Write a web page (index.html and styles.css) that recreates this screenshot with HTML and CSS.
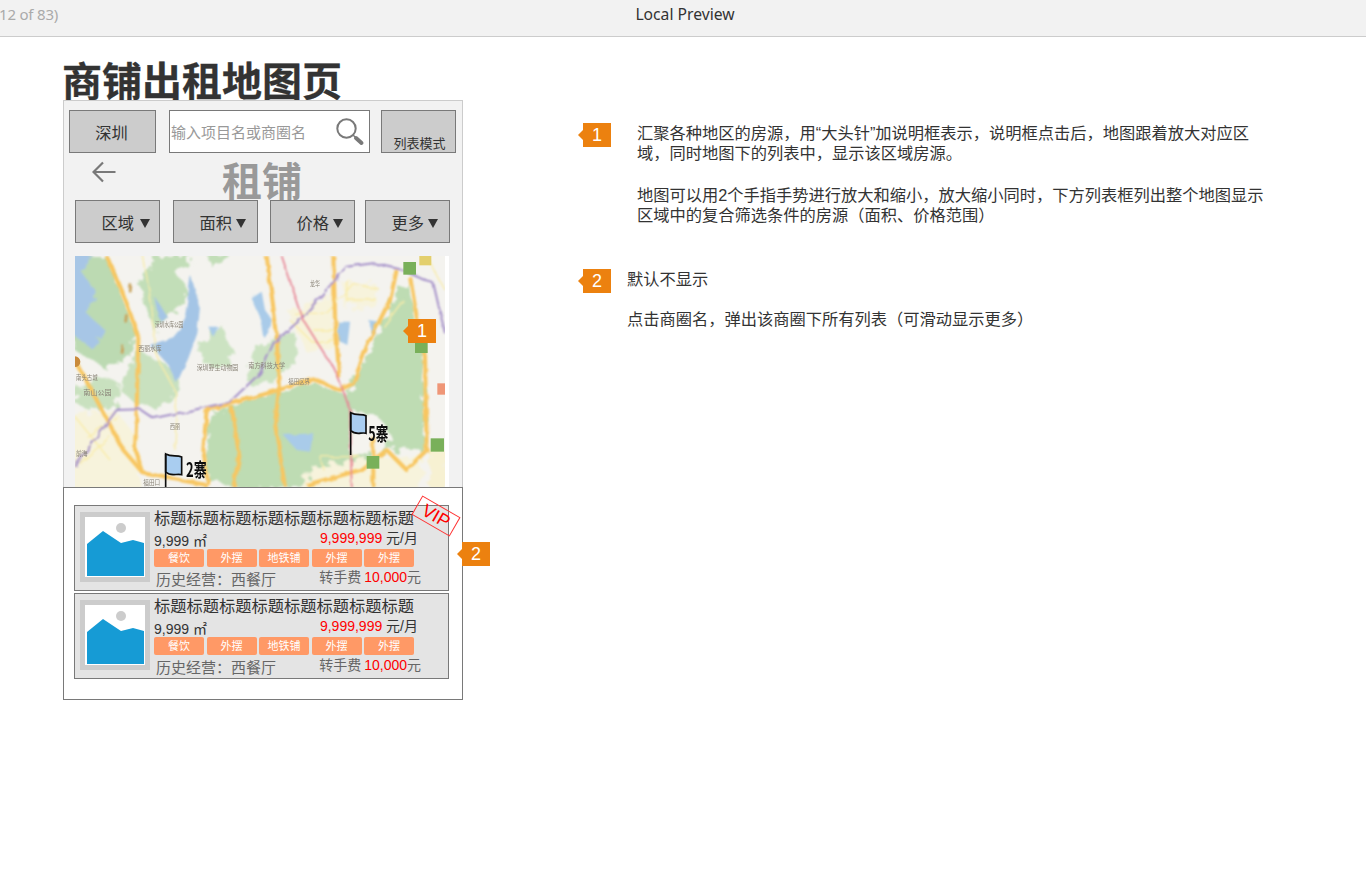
FILE: index.html
```html
<!DOCTYPE html>
<html lang="zh-CN">
<head>
<meta charset="utf-8">
<title>Local Preview</title>
<link rel="stylesheet" href="styles.css">
</head>
<body>
<header class="topbar">
  <span class="pager">12 of 83)</span>
  <span class="topbar-title">Local Preview</span>
</header>
<main class="canvas">
  <section class="left">
    <h1 class="page-title">商铺出租地图页</h1>
    <div class="phone">
      <div class="search-row">
        <div class="btn city">深圳</div>
        <div class="search">
          <span class="placeholder">输入项目名或商圈名</span>
          <svg class="search-icon" viewBox="0 0 30 30"><circle cx="11.500" cy="11.500" r="9.200" fill="none" stroke="#797979" stroke-width="2"/><path d="M18 18l8 7.500" stroke="#797979" stroke-width="1.500" fill="none"/><path d="M21 21l5.500 5" stroke="#797979" stroke-width="4" stroke-linecap="round" fill="none"/></svg>
        </div>
        <div class="btn mode">列表模式</div>
      </div>
      <div class="heading-row">
        <svg class="back" viewBox="0 0 24 22"><path d="M23.500 11H2M11 1.500 1.500 11 11 20.500" fill="none" stroke="#797979" stroke-width="2.200"/></svg>
        <div class="heading">租铺</div>
      </div>
      <div class="filters">
        <div class="btn filter">区域<span class="caret"></span></div>
        <div class="btn filter">面积<span class="caret"></span></div>
        <div class="btn filter">价格<span class="caret"></span></div>
        <div class="btn filter">更多<span class="caret"></span></div>
      </div>
      <div class="map-wrap">
        <svg class="map" viewBox="45 18 1110 693" preserveAspectRatio="none">
          <defs>
            <filter id="area" x="-5%" y="-5%" width="110%" height="110%">
              <feTurbulence type="fractalNoise" baseFrequency="0.035" numOctaves="3" seed="7" result="n"/>
              <feDisplacementMap in="SourceGraphic" in2="n" scale="42" result="d"/>
              <feGaussianBlur in="d" stdDeviation="3"/>
            </filter>
            <filter id="soft" x="-5%" y="-5%" width="110%" height="110%">
              <feTurbulence type="fractalNoise" baseFrequency="0.03" numOctaves="2" seed="3" result="n"/>
              <feDisplacementMap in="SourceGraphic" in2="n" scale="14" result="d"/>
              <feGaussianBlur in="d" stdDeviation="2.800"/>
            </filter>
            <filter id="ink" x="-20%" y="-20%" width="140%" height="140%"><feGaussianBlur stdDeviation="1.800"/></filter>
          </defs>
          <rect x="45" y="18" width="1110" height="693" fill="#f4f3ef"/>
          <g filter="url(#area)">
            <path d="M60 18H140L170 100 230 250 200 330 130 350 45 300V18Z" fill="#bcdab2"/>
            <path d="M30 10H95L70 70 110 130 80 190 140 245 95 295 30 250Z" fill="#a7c6e6"/>
            <path d="M280 18H400L350 70 390 130 330 200 280 240 240 110Z" fill="#c2deb8"/>
            <path d="M440 10H520L490 45H450Z" fill="#c2deb8"/>
            <path d="M420 280 480 220 515 300 510 350 430 345Z" fill="#cce3c2"/>
            <path d="M230 300 340 350 360 420 300 470 240 470 180 420Z" fill="#c9e1bf"/>
            <path d="M45 420 130 380 180 400 170 470 80 480 45 460Z" fill="#c9e1bf"/>
            <path d="M590 290 700 240 715 330 640 400 560 400Z" fill="#cce3c2"/>
            <path d="M445 490 640 425 770 400 860 435 880 400 930 300 1010 130 1040 90 1090 300 1095 610 1030 590 960 610 900 640 760 650 730 705 560 720 440 690Z" fill="#bedcb3"/>
            <path d="M1060 90 1155 120V200L1090 260Z" fill="#f4f3ef"/>
            <path d="M880 480 960 505 1000 570 950 615 875 615Z" fill="#f5f4ef"/>
            <path d="M760 650 900 630 1000 615 1090 625 1080 720H720Z" fill="#f7f3dc"/>
            <path d="M30 490 170 485 230 560 250 720H30Z" fill="#f7f3dc"/>
            <path d="M690 190 820 130 830 300 740 310Z" fill="#f7f3dc"/>
            <path d="M1110 600h50v120h-50z" fill="#f7f1d2"/>
            <path d="M845 100 950 100 950 170 850 170Z" fill="#f7f3dc"/>
          </g>
          <g filter="url(#soft)">
            <path d="M392 75 420 170 412 250 385 325 350 400 325 345 270 285 340 262 372 222 385 130Z" fill="#a4c5e6"/>
            <path d="M285 140 325 205 300 215Z" fill="#a4c5e6"/>
            <path d="M575 145 605 125 615 180 640 215 610 262 600 200Z" fill="#a9cbe9"/>
            <path d="M445 230 475 230 460 260Z" fill="#a9cbe9"/>
            <path d="M832 215 870 215 862 285 832 270Z" fill="#a9cbe9"/>
            <path d="M925 210 955 215 940 260Z" fill="#a9cbe9"/>
            <path d="M670 555 760 550 750 605 710 600Z" fill="#a9cbe9"/>
          </g>
          <g filter="url(#soft)" fill="none" stroke-linejoin="round">
            <g stroke="#f9eca8" stroke-width="4">
              <path d="M250 18 275 170 290 320 350 430 345 600"/>
              <path d="M700 190 800 190 880 100 960 120M860 90V150H950M690 210 760 280 830 270"/>
              <path d="M45 500 150 630M80 560 180 500M790 660 780 620H900"/>
              <path d="M1100 18 1155 120M1030 150 970 230M60 640 150 560M760 240H830"/>
            </g>
            <g stroke="#f8c661" stroke-width="12">
              <path d="M140 18 200 160 235 260 230 480 225 600 250 670 440 705"/>
              <path d="M45 330 110 450 190 600 250 670"/>
              <path d="M620 18 650 250 657 420 645 520 675 711"/>
              <path d="M440 480 510 462 640 425 760 388 840 420 880 400 920 290 990 150 1010 60"/>
              <path d="M1050 80 1070 200 1095 320 1100 600 1040 660 980 600 900 660 740 705"/>
              <path d="M440 480 430 600 445 705M515 470 538 620 520 711"/>
              <path d="M820 18 825 200 838 385M940 560V711"/>
            </g>
            <path d="M45 650 170 480 240 478 280 505 400 480 510 455 600 370 640 280 720 210 860 50 940 40 1030 60 1120 100 1155 250" stroke="#a591c9" stroke-width="6"/>
            <path d="M665 18 730 210 830 370 870 480 875 711" stroke="#e78494" stroke-width="5"/>
            <path d="M210 100 185 320" stroke="#c9a35c" stroke-width="8" stroke-dasharray="24 70"/>
          </g>
          <g filter="url(#ink)">
            <rect x="1030" y="36" width="38" height="38" fill="#79b05a"/><rect x="1078" y="18" width="36" height="28" fill="#e3cf6d"/>
            <rect x="1065" y="275" width="38" height="34" fill="#79b05a"/><rect x="920" y="618" width="38" height="38" fill="#79b05a"/>
            <rect x="1112" y="565" width="40" height="40" fill="#79b05a"/><rect x="1132" y="400" width="23" height="34" fill="#ef9677"/>
            <circle cx="45" cy="335" r="16" fill="#c98a3a"/>
            <g class="map-label">
              <text x="285" y="232" textLength="85" lengthAdjust="spacingAndGlyphs">深圳水库公园</text>
              <text x="235" y="304" textLength="70" lengthAdjust="spacingAndGlyphs">西丽水库</text>
              <text x="410" y="360" textLength="125" lengthAdjust="spacingAndGlyphs">深圳野生动物园</text>
              <text x="565" y="353" textLength="110" lengthAdjust="spacingAndGlyphs">南方科技大学</text>
              <text x="685" y="403" textLength="65" lengthAdjust="spacingAndGlyphs">福田区界</text>
              <text x="70" y="436" textLength="85" lengthAdjust="spacingAndGlyphs">南山公园</text>
              <text x="48" y="390" textLength="65" lengthAdjust="spacingAndGlyphs">南头古城</text>
              <text x="750" y="108" textLength="30" lengthAdjust="spacingAndGlyphs">龙华</text>
              <text x="330" y="537" textLength="30" lengthAdjust="spacingAndGlyphs">西丽</text>
              <text x="48" y="618" textLength="35" lengthAdjust="spacingAndGlyphs">前海</text>
              <text x="250" y="704" textLength="50" lengthAdjust="spacingAndGlyphs">福田口</text>
            </g>
          </g>
          <g filter="url(#ink)">
            <path d="M872 488C890 498 905 490 918 497V550C905 545 890 558 872 542Z" fill="#a9cdf0" stroke="#111" stroke-width="5"/>
            <path d="M872 488V615" stroke="#111" stroke-width="5"/>
            <text x="925" y="574" textLength="60" lengthAdjust="spacingAndGlyphs" class="flag-label">5寨</text>
            <path d="M317 612C335 622 350 614 365 621V674C350 669 335 682 317 666Z" fill="#a9cdf0" stroke="#111" stroke-width="5"/>
            <path d="M317 612V711" stroke="#111" stroke-width="5"/>
            <text x="378" y="680" textLength="62" lengthAdjust="spacingAndGlyphs" class="flag-label">2寨</text>
          </g>
        </svg>
        <div class="badge badge-map">1</div>
      </div>
    </div>
    <div class="list">
      <article class="card">
        <svg class="thumb" viewBox="0 0 70 70"><rect width="70" height="70" fill="#ccc"/><rect x="5" y="5" width="60" height="60" fill="#fff"/><circle cx="41" cy="16" r="5" fill="#ccc"/><path d="M7 32 23 19 41 31 53 28 64 31V64H7Z" fill="#169bd5"/></svg>
        <div class="info">
          <div class="card-title">标题标题标题标题标题标题标题标题</div>
          <div class="row-price"><span class="area">9,999 ㎡</span><span class="price"><b>9,999,999</b> 元/月</span></div>
          <div class="tags"><span>餐饮</span><span>外摆</span><span>地铁铺</span><span>外摆</span><span>外摆</span></div>
          <div class="row-meta"><span class="history">历史经营：西餐厅</span><span class="fee">转手费 <b>10,000</b>元</span></div>
        </div>
        <div class="vip">VIP</div>
      </article>
      <article class="card">
        <svg class="thumb" viewBox="0 0 70 70"><rect width="70" height="70" fill="#ccc"/><rect x="5" y="5" width="60" height="60" fill="#fff"/><circle cx="41" cy="16" r="5" fill="#ccc"/><path d="M7 32 23 19 41 31 53 28 64 31V64H7Z" fill="#169bd5"/></svg>
        <div class="info">
          <div class="card-title">标题标题标题标题标题标题标题标题</div>
          <div class="row-price"><span class="area">9,999 ㎡</span><span class="price"><b>9,999,999</b> 元/月</span></div>
          <div class="tags"><span>餐饮</span><span>外摆</span><span>地铁铺</span><span>外摆</span><span>外摆</span></div>
          <div class="row-meta"><span class="history">历史经营：西餐厅</span><span class="fee">转手费 <b>10,000</b>元</span></div>
        </div>
      </article>
      <div class="badge badge-list">2</div>
    </div>
  </section>
  <section class="notes">
    <div class="note note-one">
      <div class="badge">1</div>
      <div class="note-text">
        <p>汇聚各种地区的房源，用“大头针”加说明框表示，说明框点击后，地图跟着放大对应区<br>域，同时地图下的列表中，显示该区域房源。</p>
        <p>地图可以用2个手指手势进行放大和缩小，放大缩小同时，下方列表框列出整个地图显示<br>区域中的复合筛选条件的房源（面积、价格范围）</p>
      </div>
    </div>
    <div class="note note-two">
      <div class="badge">2</div>
      <div class="note-text">
        <p>默认不显示</p>
        <p>点击商圈名，弹出该商圈下所有列表（可滑动显示更多）</p>
      </div>
    </div>
  </section>
</main>
</body>
</html>
```
FILE: styles.css
```css
* { box-sizing: border-box; }
html, body { margin: 0; height: 100%; }
body {
  background: #fff;
  color: #333;
  font-family: "Liberation Sans", "Noto Sans CJK SC", sans-serif;
  font-size: 16.250px;
  overflow: hidden;
}
.topbar {
  height: 37px;
  background: #f2f2f2;
  border-bottom: 1px solid #ccc;
  display: flex;
  align-items: center;
  justify-content: center;
  position: relative;
  font-family: "Noto Sans", "Open Sans", sans-serif;
}
.topbar-title { font-size: 15.700px; color: #333; position: relative; top: -4px; left: 2px; }
.pager { position: absolute; left: -1px; top: 3px; color: #aaa; font-size: 15px; letter-spacing: -0.200px; line-height: 22px; }
.canvas { display: flex; padding-left: 63px; }
.left { width: 400px; flex: none; }
.page-title {
  margin: 23px 0 0 -1px;
  height: 40px;
  font-size: 40px;
  line-height: 44px;
  font-weight: 700;
  color: #333;
  white-space: nowrap;
  -webkit-text-stroke: 0.300px #333;
}
.phone {
  position: relative;
  height: 388px;
  background: #f2f2f2;
  border: 1px solid #ccc;
  border-bottom: 0;
  overflow: hidden;
}
.btn {
  background: #ccc;
  border: 1px solid #797979;
  display: flex;
  align-items: center;
  justify-content: center;
  flex: none;
}
.search-row { display: flex; height: 43px; margin: 9px 0 0 5px; }
.city { width: 87px; height: 43px; padding-right: 2px; }
.search {
  width: 201px;
  height: 43px;
  margin-left: 13px;
  background: #fff;
  border: 1px solid #797979;
  display: flex;
  align-items: center;
  justify-content: space-between;
  padding: 0 4px 0 1px;
}
.placeholder { font-size: 15px; color: #999; white-space: nowrap; }
.search-icon { width: 30px; height: 30px; flex: none; }
.mode {
  width: 75px;
  height: 43px;
  margin-left: 11px;
  font-size: 13px;
  align-items: flex-end;
  line-height: 16px;
  padding: 0 0 0 2px;
}
.heading-row { height: 47px; display: flex; position: relative; }
.back { width: 24px; height: 22px; margin: 8px 0 0 28px; flex: none; }
.heading {
  margin-left: 106px;
  font-size: 40px;
  font-weight: 700;
  line-height: 54px;
  height: 47px;
  color: #999;
  white-space: nowrap;
  margin-top: 2px;
}
.filters {
  display: grid;
  grid-template-columns: 98px 97px 95px 85px;
  margin-left: 11px;
  position: relative;
}
.filter {
  width: 85px;
  height: 43px;
  justify-content: flex-end;
  padding-right: 11px;
}
.filter:first-child { padding-right: 9px; }
.caret {
  width: 0;
  height: 0;
  margin-left: 4px;
  margin-top: 3px;
  border-left: 5px solid transparent;
  border-right: 5px solid transparent;
  border-top: 9px solid #333;
}
.filter:first-child .caret { margin-left: 6px; }
.map-wrap {
  position: relative;
  width: 374px;
  height: 231px;
  margin: 13px 0 0 11px;
  background: #fff;
}
.map { display: block; width: 370px; height: 231px; }
.map-label { font-family: "Noto Sans CJK SC", sans-serif; font-size: 19px; fill: #8a8478; }
.flag-label { font-family: "Noto Sans CJK SC", sans-serif; font-size: 58px; font-weight: 700; fill: #111; }
.badge {
  position: relative;
  width: 28px;
  height: 24px;
  background: #ec810f;
  color: #fff;
  font-size: 18px;
  line-height: 24px;
  text-align: center;
  flex: none;
}
.badge::before {
  content: "";
  position: absolute;
  left: -5px;
  top: 7px;
  border-top: 5px solid transparent;
  border-bottom: 5px solid transparent;
  border-right: 5px solid #ec810f;
}
.badge-map { position: absolute; left: 333px; top: 63px; }
.badge-list { position: absolute; left: 398px; top: 54px; }
.list {
  position: relative;
  height: 213px;
  background: #fff;
  border: 1px solid #797979;
  padding: 17px 13px 0 10px;
  margin-top: -1px;
}
.card {
  position: relative;
  height: 86px;
  background: #e4e4e4;
  border: 1px solid #797979;
  display: flex;
  padding: 6px 0 0 5px;
  margin-bottom: 2px;
}
.thumb { width: 70px; height: 70px; flex: none; display: block; }
.info { width: 266px; margin-left: 4px; margin-top: -2px; flex: none; }
.card-title { font-size: 16.250px; line-height: 18px; height: 18px; color: #333; white-space: nowrap; margin-top: -1px; margin-bottom: 1px; }
.row-price { display: flex; justify-content: space-between; height: 20px; padding-right: 2px; font-size: 14px; }
.area { padding-top: 5px; line-height: 16px; color: #333; }
.price { line-height: 18px; color: #333; margin-top: 1px; }
.price b, .fee b { color: #f00; font-weight: 400; }
.tags { display: flex; gap: 2.500px; height: 18px; margin-top: 1px; }
.tags span {
  width: 50px;
  height: 18px;
  background: #ff9966;
  color: #fff;
  border-radius: 2px;
  font-size: 11px;
  line-height: 18px;
  text-align: center;
}
.row-meta { display: flex; justify-content: space-between; padding: 3px 0 0 2px; }
.history { font-size: 15px; line-height: 20px; color: #666; white-space: nowrap; }
.fee { font-size: 14px; line-height: 18px; color: #666; white-space: nowrap; margin-top: -2px; margin-right: -1px; word-spacing: -1px; }
.vip {
  position: absolute;
  left: 339px;
  top: -1px;
  width: 44px;
  height: 22px;
  border: 1px solid #f33;
  color: #f00;
  font-size: 18px;
  line-height: 20px;
  text-align: center;
  transform: rotate(30deg);
}
.notes { margin: 86px 0 0 120px; width: 700px; }
.note { display: flex; }
.note p { margin: 0; line-height: 20px; white-space: nowrap; color: #333; }
.note p + p { margin-top: 21px; }
.note-one .note-text { margin-left: 26px; }
.note-one p + p { margin-top: 22px; }
.note-two { margin-top: 44px; }
.note-two .note-text { margin-left: 16px; }
.note-two p + p { margin-top: 20px; }
```
